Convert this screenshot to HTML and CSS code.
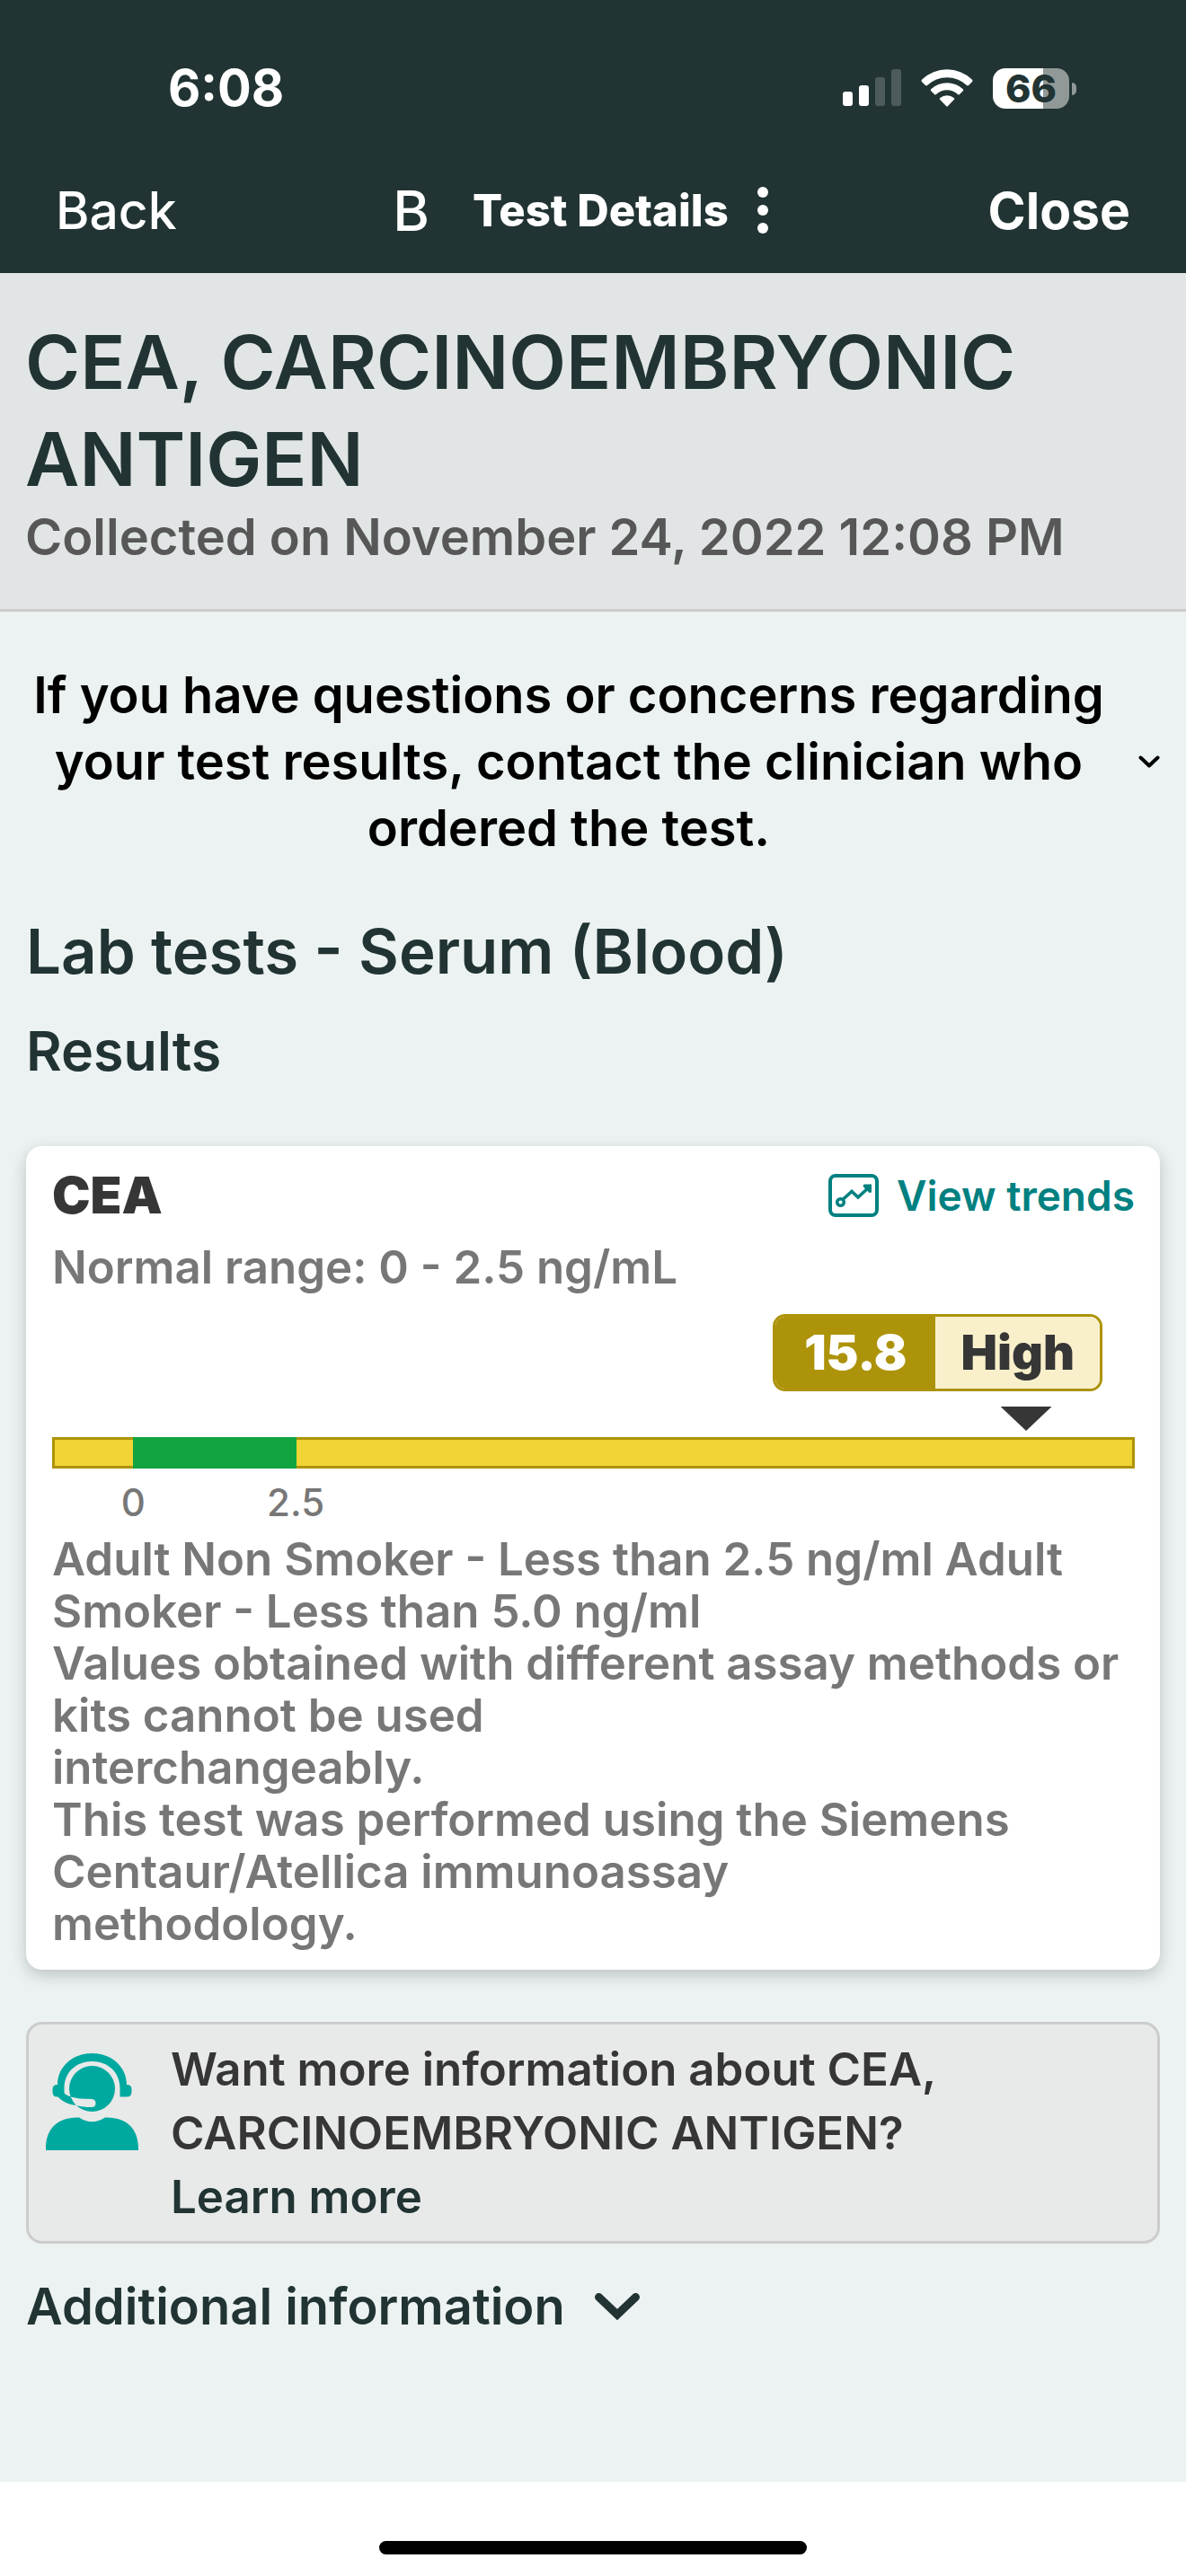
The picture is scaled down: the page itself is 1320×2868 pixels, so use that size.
FILE: index.html
```html
<!DOCTYPE html>
<html lang="en">
<head>
    <meta charset="UTF-8">
    <meta name="viewport" content="width=device-width, initial-scale=1.0">
    <title>Test Details</title>
    <link rel="stylesheet" href="styles.css">
</head>
<body>
    <header class="topbar">
        <div class="status">
            <span class="time">6:08</span>
            <div class="status-icons">
                <svg width="65" height="42" viewBox="0 0 65 42" fill="#fff">
                    <rect x="0" y="25" width="11" height="16" rx="3"/>
                    <rect x="18" y="18" width="11" height="23" rx="3"/>
                    <rect x="36" y="9" width="11" height="32" rx="3" opacity=".2"/>
                    <rect x="54" y="0" width="11" height="41" rx="3" opacity=".2"/>
                </svg>
                <svg width="58" height="42" viewBox="0 0 58 42" fill="#fff">
                    <path d="M1.2 14.2Q-.2 12.800 1.200 11.400A40.500 40.500 0 0 1 56.800 11.400Q58.200 12.800 56.800 14.200L53 18Q52 18.800 51 17.900A32 32 0 0 0 7 17.900Q6 18.800 5 18Z"/>
                    <path d="M11.200 24.300Q10.200 23.300 11.200 22.300A26 26 0 0 1 46.800 22.300Q47.800 23.300 46.800 24.300L43 28Q42 29 41 28.100A17.500 17.500 0 0 0 17 28.100Q16 29 15 28Z"/>
                    <path d="M21 33.800Q20.300 32.800 21.300 32A12 12 0 0 1 36.700 32Q37.700 32.800 37 33.800L30 41Q29 42 28 41Z"/>
                </svg>
                <div class="battery"><span>66</span></div>
            </div>
        </div>
        <nav class="nav">
            <button type="button" class="nav-back">Back</button>
            <div class="nav-title">
                <span class="initial">B</span>
                <span class="page-name">Test Details</span>
                <button type="button" class="menu" aria-label="Menu">
                    <svg width="12" height="52" viewBox="0 0 12 52" fill="#fff">
                        <circle cx="6" cy="6" r="6"/>
                        <circle cx="6" cy="26" r="6"/>
                        <circle cx="6" cy="46" r="6"/>
                    </svg>
                </button>
            </div>
            <button type="button" class="nav-close">Close</button>
        </nav>
    </header>

    <div class="heading">
        <h1>CEA, CARCINOEMBRYONIC ANTIGEN</h1>
        <p>Collected on November 24, 2022 12:08 PM</p>
    </div>

    <main class="content">
        <button type="button" class="notice">
            <span>If you have questions or concerns regarding your test results, contact the clinician who ordered the test.</span>
            <svg width="24" height="14" viewBox="0 0 24 14" fill="none" stroke="#000" stroke-width="4" stroke-linecap="round" stroke-linejoin="round">
                <path d="M2.500 2.500L12 11.500L21.500 2.500"/>
            </svg>
        </button>

        <h2>Lab tests - Serum (Blood)</h2>
        <h3>Results</h3>

        <section class="card">
            <div class="card-head">
                <h4>CEA</h4>
                <a href="#trends" class="trends">
                    <svg width="56" height="48" viewBox="0 0 56 48" fill="none" stroke="#008080" stroke-width="4">
                        <rect x="2" y="2" width="52" height="44" rx="6"/>
                        <circle cx="13.500" cy="31.500" r="3.800" stroke-width="3.500"/>
                        <path d="M16 28.500L26 19.500L33 26L46 14" stroke-width="3.600"/>
                        <path d="M40 11.500H48V20.500L45.500 21L39 14.500Q38 12 40 11.500Z" fill="#008080" stroke="none"/>
                    </svg>
                    View trends
                </a>
            </div>
            <p class="range">Normal range: 0 - 2.5 ng/mL</p>

            <div class="result">
                <span class="value">15.8</span>
                <span class="flag">High</span>
            </div>
            <div class="pointer" style="margin-left: 87.6%"></div>
            <div class="scale">
                <div class="low" style="width: 7.5%"></div>
                <div class="normal" style="width: 15.1%"></div>
                <div class="high"></div>
            </div>
            <div class="ticks">
                <span>0</span>
                <span>2.5</span>
            </div>

            <p class="comment">
                Adult Non Smoker - Less than 2.5 ng/ml Adult Smoker - Less than 5.0 ng/ml<br>
                Values obtained with different assay methods or kits cannot be used<br>
                interchangeably.<br>
                This test was performed using the Siemens Centaur/Atellica immunoassay<br>
                methodology.
            </p>
        </section>

        <aside class="info">
            <svg width="103" height="108" viewBox="0 0 103 108" fill="#00a9a0">
                <path d="M0 108V104C1 82 15 71 37 71.500Q51 81 66 71.500C88 71 102 82 103 104V108Z"/>
                <circle cx="51.500" cy="39.500" r="25.500"/>
                <path d="M13 35C13 15 30 0 51.500 0S90 15 90 35Q95.500 35 95.500 40V43Q95.500 48.500 90 48.500H82.500V39C82.500 21 69 9 51.500 9S20.500 21 20.500 39V44Q22 47 28 48L33 58Q20 56 13.500 48.500Q7.500 49 7.500 43V40Q7.500 35 13 35Z"/>
                <path d="M27.500 48.500Q36 51 51.500 51Q55.500 51.500 55.500 55.500Q55.500 60 51 60Q41 60 34 58Q30 54 27.500 48.500Z" fill="#e8eae9"/>
            </svg>
            <div>
                <p>Want more information about CEA, CARCINOEMBRYONIC ANTIGEN?</p>
                <a href="#learn">Learn more</a>
            </div>
        </aside>

        <button type="button" class="additional">
            Additional information
            <svg width="52" height="32" viewBox="0 0 52 32" fill="none" stroke="#213433" stroke-width="9" stroke-linecap="round" stroke-linejoin="miter">
                <path d="M5.500 5.500L26 25L46.500 5.500"/>
            </svg>
        </button>
    </main>

    <footer class="home">
        <div class="home-bar"></div>
    </footer>
</body>
</html>
```

FILE: styles.css
```css
* {
    box-sizing: border-box;
}

body {
    margin: 0;
    min-height: 100vh;
    display: flex;
    flex-direction: column;
    font-family: Inter, "Liberation Sans", sans-serif;
    font-weight: 600;
    background-color: #ecf2f2;
    color: #213433;
}

h1, h2, h3, h4, p {
    margin: 0;
    font-weight: 600;
}

a {
    text-decoration: none;
}

button {
    padding: 0;
    border: none;
    background: none;
    font: inherit;
    color: inherit;
    cursor: pointer;
}

svg {
    display: block;
    flex-shrink: 0;
}

/* Top bar */
.topbar {
    background-color: #213433;
    color: #fff;
}

.status {
    display: flex;
    justify-content: space-between;
    align-items: center;
    padding: 66px 130px 0 187px;
}

.time {
    font-size: 56px;
    font-weight: 700;
    line-height: 64px;
}

.status-icons {
    display: flex;
    align-items: center;
    gap: 22px;
}

.battery {
    position: relative;
    width: 85px;
    height: 45px;
    border-radius: 14px;
    background: linear-gradient(to right, #fff 66%, #909998 66%);
    color: #213433;
    font-size: 43px;
    font-weight: 800;
    line-height: 45px;
    text-align: center;
}

.battery::after {
    content: "";
    position: absolute;
    left: 88px;
    top: 16px;
    width: 5px;
    height: 14px;
    border-radius: 0 5px 5px 0;
    background-color: #909998;
}

.nav {
    display: grid;
    grid-template-columns: 1fr auto 1fr;
    align-items: center;
    padding: 34px 62px 0;
    height: 174px;
    font-size: 57px;
    font-weight: 500;
}

.nav-back {
    justify-self: start;
}

.nav-close {
    justify-self: end;
    font-weight: 700;
}

.nav-title {
    display: flex;
    align-items: center;
}

.initial {
    font-size: 62px;
    margin-right: 48px;
}

.page-name {
    font-size: 49px;
    font-weight: 800;
}

.menu {
    padding: 0 28px 0 32px;
}

/* Test name */
.heading {
    padding: 45px 28px 47px;
    background-color: #e1e5e5;
    border-bottom: 3px solid #ccc;
}

.heading h1 {
    font-size: 83px;
    line-height: 108px;
}

.heading p {
    font-size: 56px;
    line-height: 66px;
    color: #575757;
}

/* Content */
.content {
    flex: 1;
    padding: 56px 29px 0;
}

.notice {
    display: flex;
    align-items: center;
    gap: 30px;
    width: 100%;
    font-size: 56px;
    line-height: 74px;
    color: #000;
}

.notice span {
    flex: 1;
}

h2 {
    margin-top: 58px;
    font-size: 69px;
    line-height: 84px;
}

h3 {
    margin-top: 31px;
    font-size: 61px;
    line-height: 76px;
}

.card {
    margin-top: 68px;
    padding: 21px 28px 22px 29px;
    border-radius: 18px;
    background-color: #fff;
    box-shadow: 0 6px 18px rgba(0, 0, 0, 0.2);
}

.card-head {
    display: flex;
    justify-content: space-between;
    align-items: center;
}

h4 {
    font-size: 57px;
    font-weight: 900;
    line-height: 68px;
    color: #363636;
}

.trends {
    display: flex;
    align-items: center;
    gap: 20px;
    font-size: 46px;
    color: #008080;
}

.range {
    margin-top: 17px;
    font-size: 51px;
    line-height: 58px;
    color: #777;
}

.result {
    display: flex;
    width: fit-content;
    margin: 23px 36px 0 auto;
    border: 3px solid #ad930a;
    border-radius: 14px;
    overflow: hidden;
    font-size: 54px;
    font-weight: 900;
    line-height: 80px;
}

.value {
    padding: 0 32px;
    background-color: #ad930a;
    color: #fff;
}

.flag {
    padding: 0 28px;
    background-color: #f9f0cb;
    color: #363636;
}

.pointer {
    width: 57px;
    height: 27px;
    margin-top: 17px;
    background-color: #363636;
    clip-path: polygon(0 0, 100% 0, 50% 100%);
}

.scale {
    display: flex;
    height: 35px;
    margin-top: 7px;
}

.low, .high {
    background-color: #f1d435;
    border: 3px solid #ad930a;
}

.low {
    border-right: none;
}

.high {
    flex: 1;
    border-left: none;
}

.normal {
    background-color: #11a441;
}

.ticks {
    display: flex;
    margin-top: 13px;
    font-size: 42px;
    font-weight: 500;
    line-height: 50px;
    color: #777;
}

.ticks span {
    width: 15%;
    text-align: center;
}

.comment {
    margin-top: 9px;
    font-size: 51px;
    line-height: 58px;
    color: #777;
}

.info {
    display: flex;
    gap: 36px;
    margin-top: 58px;
    padding: 14px 19px;
    border: 3px solid #ccc;
    border-radius: 18px;
    background-color: #e8eae9;
    font-size: 51px;
    line-height: 71px;
}

.info svg {
    margin-top: 18px;
}

.info p {
    color: #363636;
}

.info a {
    color: #213433;
}

.additional {
    display: flex;
    align-items: center;
    gap: 32px;
    margin-top: 35px;
    font-size: 56px;
    line-height: 70px;
}

/* Home indicator */
.home {
    padding: 66px 0 24px;
    background-color: #fff;
}

.home-bar {
    width: 36%;
    height: 15px;
    margin: 0 auto;
    border-radius: 8px;
    background-color: #000;
}
```
